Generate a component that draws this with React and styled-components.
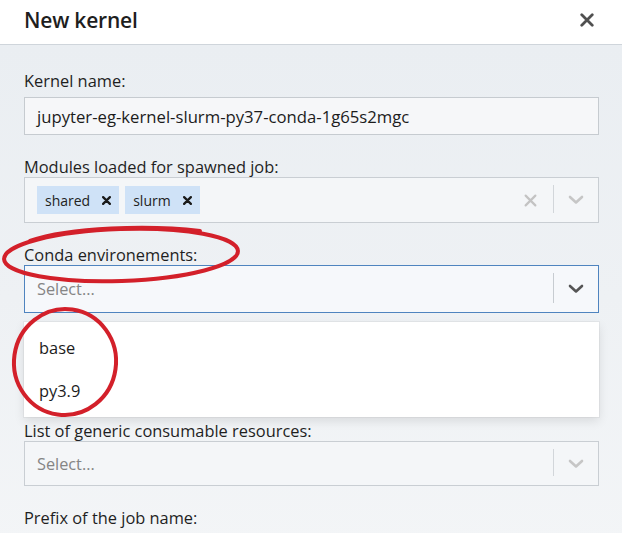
import styled, { createGlobalStyle } from 'styled-components';

const GlobalStyle = createGlobalStyle`
  html, body {
    margin: 0;
    padding: 0;
    background: #ffffff;
  }
  body {
    font-family: "Open Sans", "Noto Sans", "Liberation Sans", sans-serif;
    color: #1f1f1f;
  }
`;

const Dialog = styled.div`
  position: relative;
  width: 622px;
  height: 533px;
  overflow: hidden;
  display: flex;
  flex-direction: column;
`;

const Header = styled.div`
  display: flex;
  align-items: center;
  justify-content: space-between;
  box-sizing: border-box;
  height: 45px;
  padding: 0 28px 4px 24px;
  background: #ffffff;
  border-bottom: 1px solid #cfd5db;
  flex-shrink: 0;
`;

const Title = styled.h2`
  margin: 0;
  font-size: 21px;
  font-weight: 600;
  letter-spacing: -0.2px;
  color: #1e1e1e;
`;

const CloseButton = styled.button`
  display: flex;
  padding: 0;
  border: none;
  background: none;
  cursor: pointer;
`;

const Body = styled.div`
  flex: 1;
  padding: 25px 23px 0 24px;
  background: linear-gradient(180deg, #eaeef2 0%, #eef1f4 50%, #f3f5f7 100%);
`;

const Field = styled.div`
  display: flex;
  flex-direction: column;
  margin-bottom: ${p => (p.$open ? '0' : '21px')};
`;

const Label = styled.label`
  font-size: 16.4px;
  line-height: 21px;
  margin-bottom: ${p => p.$gap || 0}px;
  color: #1f1f1f;
`;

const TextInput = styled.div`
  height: 38px;
  box-sizing: border-box;
  display: flex;
  align-items: center;
  padding: 0 12px;
  background: #f6f7f9;
  border: 1px solid #c6cbd0;
  font-size: 16.7px;
  color: #1c1c1c;
`;

const SelectBox = styled.div`
  display: flex;
  align-items: center;
  box-sizing: border-box;
  min-height: ${p => p.$height || 46}px;
  background: ${p => (p.$focused ? '#f6f8fb' : '#f4f6f8')};
  border: 1px solid ${p => (p.$focused ? '#4f84bf' : '#c9ced3')};
`;

const ValueArea = styled.div`
  flex: 1;
  display: flex;
  align-items: center;
  gap: 6px;
  padding: 0 12px;
`;

const Placeholder = styled.span`
  font-size: 16.3px;
  color: #858585;
`;

const Chip = styled.span`
  display: inline-flex;
  align-items: center;
  height: 28px;
  padding: 0 8px 0 8px;
  gap: 12px;
  background: #cfe2f7;
  font-size: 14px;
  color: #222;
`;

const Indicators = styled.div`
  display: flex;
  align-items: center;
  align-self: stretch;
`;

const ClearIndicator = styled.span`
  display: flex;
  padding: 0 16px 0 8px;
`;

const Separator = styled.span`
  width: 1px;
  align-self: stretch;
  margin: 7px 0 9px;
  background: ${p => (p.$focused ? '#c7ccd1' : '#d2d6da')};
`;

const Chevron = styled.span`
  display: flex;
  justify-content: center;
  width: 44px;
`;

const Menu = styled.div`
  margin: 9px 0 3px;
  padding: 4px 0 5px;
  background: #ffffff;
  box-shadow: 0 0 0 1px rgba(0, 0, 0, 0.04), 0 4px 10px rgba(0, 0, 0, 0.1);
`;

const Option = styled.div`
  height: 43px;
  display: flex;
  align-items: center;
  padding: 0 15px;
  font-size: 16.4px;
  color: #1c1c1c;
`;

const Annotations = styled.svg`
  position: absolute;
  left: 0;
  top: 0;
  pointer-events: none;
`;

const Cross = ({ size = 12, color = '#555', weight = 2.2 }) => (
  <svg width={size} height={size} viewBox="0 0 12 12">
    <path d="M1.5 1.5 L10.5 10.5 M10.5 1.5 L1.5 10.5" stroke={color} strokeWidth={weight} strokeLinecap="round" />
  </svg>
);

const ChevronIcon = ({ color }) => (
  <svg width="16" height="10" viewBox="0 0 16 10">
    <polyline points="2,2 8,7.5 14,2" fill="none" stroke={color} strokeWidth="2.6" strokeLinecap="round" strokeLinejoin="round" />
  </svg>
);

const Select = ({ focused, values, clearable, height, placeholder = 'Select...' }) => (
  <SelectBox $focused={focused} $height={height}>
    <ValueArea>
      {values && values.length
        ? values.map(v => (
            <Chip key={v}>
              {v}
              <Cross size={9} color="#1a1a1a" weight={3} />
            </Chip>
          ))
        : <Placeholder>{placeholder}</Placeholder>}
    </ValueArea>
    <Indicators>
      {clearable && (
        <ClearIndicator>
          <Cross size={13} color="#c3c3c3" weight={2} />
        </ClearIndicator>
      )}
      <Separator $focused={focused} />
      <Chevron>
        <ChevronIcon color={focused ? '#555555' : '#c6c6c6'} />
      </Chevron>
    </Indicators>
  </SelectBox>
);

export default function App() {
  return (
    <>
      <GlobalStyle />
      <Dialog>
        <Header>
          <Title>New kernel</Title>
          <CloseButton>
            <Cross size={14} color="#505050" weight={2.4} />
          </CloseButton>
        </Header>
        <Body>
          <Field>
            <Label $gap={6}>Kernel name:</Label>
            <TextInput>jupyter-eg-kernel-slurm-py37-conda-1g65s2mgc</TextInput>
          </Field>
          <Field>
            <Label>Modules loaded for spawned job:</Label>
            <Select values={['shared', 'slurm']} clearable />
          </Field>
          <Field $open>
            <Label>Conda environements:</Label>
            <Select focused height={48} />
            <Menu>
              <Option>base</Option>
              <Option>py3.9</Option>
            </Menu>
          </Field>
          <Field>
            <Label>List of generic consumable resources:</Label>
            <Select height={45} />
          </Field>
          <Field>
            <Label>Prefix of the job name:</Label>
          </Field>
        </Body>
        <Annotations width="622" height="533" viewBox="0 0 622 533">
          <g fill="none" stroke="#d3202a" strokeWidth="4" strokeLinecap="round">
            <ellipse cx="121" cy="255" rx="117" ry="26" transform="rotate(-2 121 255)" />
            <path d="M30 241 C 70 227, 150 225, 200 231" />
            <ellipse cx="65" cy="362" rx="51" ry="53" transform="rotate(8 65 362)" />
          </g>
        </Annotations>
      </Dialog>
    </>
  );
}
